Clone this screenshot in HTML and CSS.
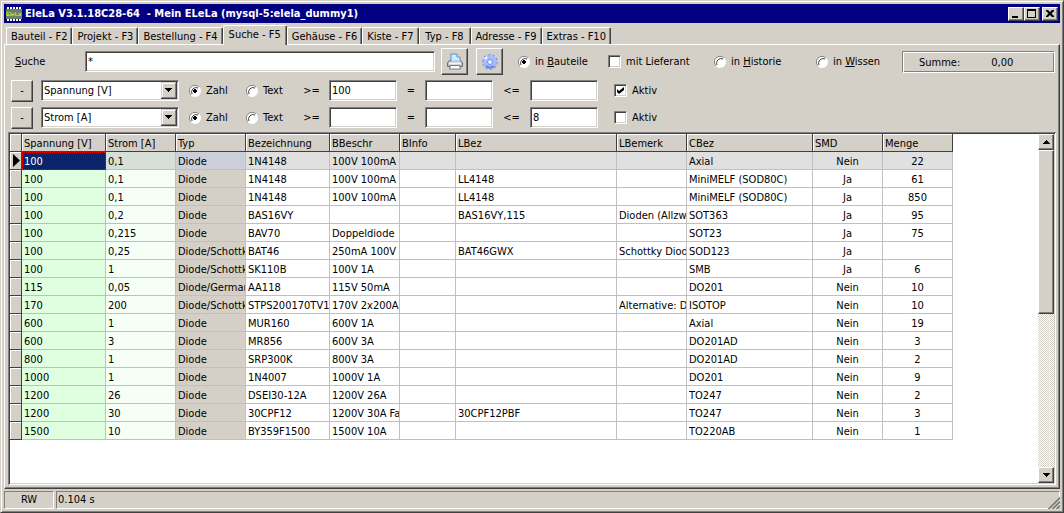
FILE: index.html
```
<!DOCTYPE html>
<html lang="de">
<head>
    <meta charset="UTF-8">
    <meta name="viewport" content="width=device-width, initial-scale=1.0">
    <title>EleLa V3.1.18C28-64 - Mein ELeLa</title>
    <link rel="stylesheet" href="styles.css">
</head>
<body>
    <div class="window">
        <header class="titlebar">
            <svg class="app-icon" width="16" height="16" viewBox="0 0 16 16">
                <path d="M2 1v14M5 1v14M8 1v14M11 1v14M14 1v14" stroke="#fff" stroke-width="2" />
                <rect y="3" width="16" height="10" fill="#6b8068" />
                <text x="0" y="10">EleLa</text>
            </svg>
            <h1>EleLa V3.1.18C28-64 &nbsp;- Mein ELeLa (mysql-5:elela_dummy1)</h1>
            <div class="window-buttons">
                <button type="button" aria-label="Minimieren">
                    <svg width="12" height="10" viewBox="0 0 12 10"><path d="M2 7h6v2H2z" /></svg>
                </button>
                <button type="button" aria-label="Maximieren">
                    <svg width="12" height="10" viewBox="0 0 12 10"><path d="M1 0h9v9H1zM2 2v6h7V2z" fill-rule="evenodd" /></svg>
                </button>
                <button type="button" class="close" aria-label="Schließen">
                    <svg width="12" height="10" viewBox="0 0 12 10"><path d="M2 1h2l2 2 2-2h2v1L7.500 4.500 10 7v1H8L6 6 4 8H2V7l2.500-2.500L2 2z" /></svg>
                </button>
            </div>
        </header>

        <nav class="tabs">
            <button type="button">Bauteil - F2</button>
            <button type="button">Projekt - F3</button>
            <button type="button">Bestellung - F4</button>
            <button type="button" class="active">Suche - F5</button>
            <button type="button">Gehäuse - F6</button>
            <button type="button">Kiste - F7</button>
            <button type="button">Typ - F8</button>
            <button type="button">Adresse - F9</button>
            <button type="button">Extras - F10</button>
        </nav>

        <main class="page">
            <form class="search">
                <label class="search-label" for="suche"><u>S</u>uche</label>
                <input type="text" class="search-text" id="suche" value="*">
                <button type="button" class="tool" aria-label="Drucken">
                    <svg width="18" height="18" viewBox="0 0 18 18">
                        <path d="M5 8V1h6l3 3v4z" fill="#d5ecff" stroke="#4f91cc" />
                        <path d="M11 1v3h3" fill="#fff" stroke="#4f91cc" />
                        <path d="M1.500 9.500l2-2h11l2 2v4h-15z" fill="#b4b8be" stroke="#697079" />
                        <path d="M5 7h9v2H5z" fill="#a9d3f5" />
                        <path d="M3 10.500h12" stroke="#f7f7f7" stroke-width="2" />
                        <path d="M4.500 12.500h9l1 3.500h-11z" fill="#fff" stroke="#747a83" />
                    </svg>
                </button>
                <button type="button" class="tool" aria-label="Einstellungen">
                    <svg width="18" height="18" viewBox="0 0 18 18">
                        <circle cx="9" cy="9" r="7" fill="none" stroke="#7d98ee" stroke-width="2" stroke-dasharray="2.400 2" />
                        <circle cx="9" cy="9" r="5" fill="#d5e0ff" stroke="#a5bbfa" stroke-width="4" />
                        <path d="M5 13a6 6 0 0 0 8 0" fill="none" stroke="#6582dd" stroke-width="2" />
                        <circle cx="9" cy="9" r="2.500" fill="#eef3ff" stroke="#6684e5" />
                        <path d="M4 6l2-2" stroke="#fff" stroke-width="2" />
                    </svg>
                </button>
                <label class="in-bauteile"><input type="radio" name="ziel" checked><span>in <u>B</u>auteile</span></label>
                <label class="mit-lieferant"><input type="checkbox"><span>mit Lieferant</span></label>
                <label class="in-historie"><input type="radio" name="ziel"><span>in <u>H</u>istorie</span></label>
                <label class="in-wissen"><input type="radio" name="ziel"><span>in <u>W</u>issen</span></label>
                <div class="sum"><span>Summe:</span><output>0,00</output></div>
            </form>

            <form class="filter">
                <button type="button" class="minus">-</button>
                <select aria-label="Feld"><option>Spannung [V]</option></select>
                <label><input type="radio" name="art" checked><span>Zahl</span></label>
                <label><input type="radio" name="art"><span>Text</span></label>
                <label class="op" for="min1">&gt;=</label>
                <input type="text" id="min1" value="100">
                <label class="op" for="eq1">=</label>
                <input type="text" id="eq1">
                <label class="op" for="max1">&lt;=</label>
                <input type="text" id="max1">
                <label class="aktiv"><input type="checkbox" checked><span>Aktiv</span></label>
            </form>

            <form class="filter">
                <button type="button" class="minus">-</button>
                <select aria-label="Feld"><option>Strom [A]</option></select>
                <label><input type="radio" name="art" checked><span>Zahl</span></label>
                <label><input type="radio" name="art"><span>Text</span></label>
                <label class="op" for="min2">&gt;=</label>
                <input type="text" id="min2">
                <label class="op" for="eq2">=</label>
                <input type="text" id="eq2">
                <label class="op" for="max2">&lt;=</label>
                <input type="text" id="max2" value="8">
                <label class="aktiv"><input type="checkbox"><span>Aktiv</span></label>
            </form>

            <div class="grid-box">
                <div class="grid">
                    <table>
                        <colgroup>
                            <col class="w-mark"><col class="w-84"><col class="w-70"><col class="w-70">
                            <col class="w-84"><col class="w-70"><col class="w-56"><col class="w-161">
                            <col class="w-70"><col class="w-126"><col class="w-70"><col class="w-70">
                        </colgroup>
                        <thead>
                            <tr>
                                <th></th><th>Spannung [V]</th><th>Strom [A]</th><th>Typ</th>
                                <th>Bezeichnung</th><th>BBeschr</th><th>BInfo</th><th>LBez</th>
                                <th>LBemerk</th><th>CBez</th><th>SMD</th><th>Menge</th>
                            </tr>
                        </thead>
                        <tbody id="rows"></tbody>
                    </table>
                </div>
                <div class="scrollbar">
                    <button type="button" aria-label="Nach oben">
                        <svg width="7" height="4" viewBox="0 0 7 4"><path d="M3 0h1v1h1v1h1v1h1v1H0V3h1V2h1V1h1z" /></svg>
                    </button>
                    <div class="thumb"></div>
                    <div class="track"></div>
                    <button type="button" aria-label="Nach unten">
                        <svg width="7" height="4" viewBox="0 0 7 4"><path d="M0 0h7v1H6v1H5v1H4v1H3V3H2V2H1V1H0z" /></svg>
                    </button>
                </div>
            </div>
        </main>

        <footer class="status">
            <div class="mode">RW</div>
            <div class="time">0.104 s</div>
            <svg class="grip" width="13" height="13" viewBox="0 0 13 13">
                <path d="M0 13L13 0M4 13l9-9M8 13l5-5" stroke="#fff" />
                <path d="M1.500 13L13 1.500M5.500 13L13 5.500M9.500 13L13 9.500" stroke="#808080" stroke-width="2" />
            </svg>
        </footer>
    </div>

    <script>
        // Spannung, Strom, Typ, Bezeichnung, BBeschr, BInfo, LBez, LBemerk, CBez, SMD, Menge
        const parts = [
            ["100", "0,1", "Diode", "1N4148", "100V 100mA", "", "", "", "Axial", "Nein", "22"],
            ["100", "0,1", "Diode", "1N4148", "100V 100mA", "", "LL4148", "", "MiniMELF (SOD80C)", "Ja", "61"],
            ["100", "0,1", "Diode", "1N4148", "100V 100mA", "", "LL4148", "", "MiniMELF (SOD80C)", "Ja", "850"],
            ["100", "0,2", "Diode", "BAS16VY", "", "", "BAS16VY,115", "Dioden (Allzw", "SOT363", "Ja", "95"],
            ["100", "0,215", "Diode", "BAV70", "Doppeldiode", "", "", "", "SOT23", "Ja", "75"],
            ["100", "0,25", "Diode/Schottk", "BAT46", "250mA 100V", "", "BAT46GWX", "Schottky Diod", "SOD123", "Ja", ""],
            ["100", "1", "Diode/Schottk", "SK110B", "100V 1A", "", "", "", "SMB", "Ja", "6"],
            ["115", "0,05", "Diode/German", "AA118", "115V 50mA", "", "", "", "DO201", "Nein", "10"],
            ["170", "200", "Diode/Schottk", "STPS200170TV1", "170V 2x200A", "", "", "Alternative: D", "ISOTOP", "Nein", "10"],
            ["600", "1", "Diode", "MUR160", "600V 1A", "", "", "", "Axial", "Nein", "19"],
            ["600", "3", "Diode", "MR856", "600V 3A", "", "", "", "DO201AD", "Nein", "3"],
            ["800", "1", "Diode", "SRP300K", "800V 3A", "", "", "", "DO201AD", "Nein", "2"],
            ["1000", "1", "Diode", "1N4007", "1000V 1A", "", "", "", "DO201", "Nein", "9"],
            ["1200", "26", "Diode", "DSEI30-12A", "1200V 26A", "", "", "", "TO247", "Nein", "2"],
            ["1200", "30", "Diode", "30CPF12", "1200V 30A Fa", "", "30CPF12PBF", "", "TO247", "Nein", "3"],
            ["1500", "10", "Diode", "BY359F1500", "1500V 10A", "", "", "", "TO220AB", "Nein", "1"]
        ];

        function renderRows() {
            const body = document.getElementById("rows");
            parts.forEach((part, index) => {
                const row = document.createElement("tr");
                if (index === 0) {
                    row.className = "current";
                }
                const mark = document.createElement("th");
                mark.scope = "row";
                row.appendChild(mark);
                part.forEach(value => {
                    const cell = document.createElement("td");
                    const text = document.createElement("div");
                    text.className = "cell";
                    text.textContent = value;
                    cell.appendChild(text);
                    row.appendChild(cell);
                });
                body.appendChild(row);
            });
        }

        renderRows();
    </script>
</body>
</html>
```
FILE: styles.css
```
* {
    box-sizing: border-box;
}

body {
    margin: 0;
    font-family: Tahoma, "DejaVu Sans Condensed", "Noto Sans", sans-serif;
    font-size: 11px;
    line-height: 14px;
    color: #000;
    background: #d4d0c8;
}

button,
input,
select {
    margin: 0;
    padding: 0;
    font: inherit;
    color: inherit;
    border-radius: 0;
    appearance: none;
}

svg {
    display: block;
}

.window {
    display: flex;
    flex-direction: column;
    height: 100vh;
    padding: 3px;
    border: 1px solid;
    border-color: #d4d0c8 #404040 #404040 #d4d0c8;
    box-shadow: inset 1px 1px #fff, inset -1px -1px #808080;
}

/* Title bar */
.titlebar {
    display: flex;
    align-items: center;
    height: 19px;
    padding: 0 2px;
    background: #000080;
    color: #fff;
}

.titlebar h1 {
    flex: 1;
    margin: 0 0 0 3px;
    font-size: 11px;
    line-height: 14px;
    white-space: nowrap;
}

.app-icon text {
    font-family: "Liberation Sans", sans-serif;
    font-size: 6px;
    fill: #d8ff20;
}

.window-buttons {
    display: flex;
}

.window-buttons button {
    width: 16px;
    height: 14px;
    padding: 1px;
}

.window-buttons .close {
    margin-left: 2px;
}

/* Raised buttons */
.window-buttons button,
.scrollbar button,
.thumb,
.tool,
.minus {
    border: 1px solid;
    border-color: #fff #404040 #404040 #fff;
    background: #d4d0c8;
    color: #000;
    box-shadow: inset -1px -1px #808080;
}

/* Tabs */
.tabs {
    display: flex;
    align-items: flex-end;
    height: 21px;
    padding-left: 2px;
}

.tabs button {
    min-width: 52px;
    height: 17px;
    padding: 1px 4px 0;
    border: 1px solid;
    border-color: #fff #404040 transparent #fff;
    border-bottom: 0;
    border-radius: 2px 2px 0 0;
    background: #d4d0c8;
    box-shadow: inset -1px 0 #808080;
    white-space: nowrap;
}

.tabs .active {
    height: 20px;
    padding: 0 5px 2px;
    margin-bottom: -1px;
    z-index: 1;
}

/* Page */
.page {
    display: flex;
    flex: 1;
    flex-direction: column;
    min-height: 0;
    padding: 1px 3px 3px;
    border: 1px solid;
    border-color: #fff #404040 #404040 #fff;
    box-shadow: inset -1px -1px #808080;
}

input[type="text"],
select {
    height: 21px;
    padding: 0 2px;
    border: 1px solid;
    border-color: #808080 #fff #fff #808080;
    background-color: #fff;
    box-shadow: inset 1px 1px #404040, inset -1px -1px #d4d0c8;
    outline: none;
}

label {
    display: flex;
    align-items: center;
    gap: 5px;
    white-space: nowrap;
}

input[type="radio"],
input[type="checkbox"] {
    flex: none;
    width: 12px;
    height: 12px;
}

input[type="radio"] {
    background: url("data:image/svg+xml,%3Csvg xmlns='http://www.w3.org/2000/svg' viewBox='0 0 12 12'%3E%3Ccircle cx='6' cy='6' r='6' fill='white'/%3E%3Cg fill='none'%3E%3Cpath d='M2 10A5.500 5.500 0 0 1 10 2' stroke='%23808080'/%3E%3Cpath d='M3 9A4.500 4.500 0 0 1 9 3' stroke='%23404040'/%3E%3C/g%3E%3C/svg%3E");
}

input[type="radio"]:checked {
    background-image: url("data:image/svg+xml,%3Csvg xmlns='http://www.w3.org/2000/svg' viewBox='0 0 12 12'%3E%3Ccircle cx='6' cy='6' r='6' fill='white'/%3E%3Cg fill='none'%3E%3Cpath d='M2 10A5.500 5.500 0 0 1 10 2' stroke='%23808080'/%3E%3Cpath d='M3 9A4.500 4.500 0 0 1 9 3' stroke='%23404040'/%3E%3C/g%3E%3Cpath d='M5 4h2v1h1v2H7v1H5V7H4V5h1z'/%3E%3C/svg%3E");
}

input[type="checkbox"] {
    width: 13px;
    height: 13px;
    border: 1px solid;
    border-color: #808080 #fff #fff #808080;
    background: #fff;
    box-shadow: inset 1px 1px #404040, inset -1px -1px #d4d0c8;
}

input[type="checkbox"]:checked {
    background-image: url("data:image/svg+xml,%3Csvg xmlns='http://www.w3.org/2000/svg' viewBox='0 0 11 11'%3E%3Cpath d='M2 4l2 2 5-4v3L4 9 2 7z'/%3E%3C/svg%3E");
}

/* Search row */
.search {
    display: flex;
    align-items: center;
    height: 31px;
    padding: 0 1px 0 7px;
}

.search-label {
    flex: none;
    gap: 0;
    width: 70px;
}

.search .search-text {
    flex: 1;
    min-width: 120px;
    margin-right: 6px;
}

.tool {
    display: grid;
    place-items: center;
    flex: none;
    width: 27px;
    height: 27px;
    margin-right: 8px;
}

.in-bauteile {
    width: 90px;
    margin-left: 7px;
}

.mit-lieferant {
    width: 106px;
}

.in-historie {
    width: 102px;
}

.in-wissen {
    width: 86px;
}

.sum {
    display: flex;
    gap: 31px;
    width: 153px;
    height: 22px;
    padding: 4px 16px 0;
    border: 1px solid;
    border-color: #808080 #fff #fff #808080;
    box-shadow: inset 1px 1px #fff, inset -1px -1px #808080;
}

/* Filter rows */
.filter {
    display: grid;
    grid-template-columns: 30px 148px 57px 48px 35px 68px 28px 68px 37px 68px 60px;
    align-items: center;
    height: 27px;
    padding-left: 3px;
}

.minus {
    width: 22px;
    height: 22px;
}

.filter select {
    width: 138px;
    padding-top: 1px;
    background-image: url("data:image/svg+xml,%3Csvg xmlns='http://www.w3.org/2000/svg' width='16' height='17'%3E%3Cpath fill='%23404040' d='M0 0h16v17H0z'/%3E%3Cpath fill='%23d4d0c8' d='M0 0h15v16H0z'/%3E%3Cpath fill='%23808080' d='M1 1h14v15H1z'/%3E%3Cpath fill='white' d='M1 1h13v14H1z'/%3E%3Cpath fill='%23d4d0c8' d='M2 2h12v13H2z'/%3E%3Cpath d='M4 6h7v1h-1v1H9v1H8v1H7V9H6V8H5V7H4z'/%3E%3C/svg%3E");
    background-repeat: no-repeat;
    background-position: right 1px top 1px;
}

.op {
    justify-content: center;
}

.aktiv {
    padding-left: 16px;
}

/* Result grid */
.grid-box {
    display: flex;
    flex: 1;
    min-height: 0;
    margin-top: 1px;
    padding: 2px;
    background: #fff;
    box-shadow: inset 1px 1px #808080, inset -1px -1px #fff, inset 2px 2px #404040, inset -2px -2px #d4d0c8;
}

.grid {
    flex: 1;
    min-width: 0;
    overflow: hidden;
}

table {
    width: 943px;
    table-layout: fixed;
    border-collapse: separate;
    border-spacing: 0;
}

.w-mark { width: 12px; }
.w-56 { width: 56px; }
.w-70 { width: 70px; }
.w-84 { width: 84px; }
.w-126 { width: 126px; }
.w-161 { width: 161px; }

th,
td {
    height: 18px;
    padding: 2px 0 0 2px;
    text-align: left;
    font-weight: normal;
    white-space: nowrap;
    border-right: 1px solid #c0c0c0;
    border-bottom: 1px solid #c0c0c0;
}

th {
    background: #d4d0c8;
    border-color: #404040;
    box-shadow: inset 1px 1px #fff;
}

.cell {
    overflow: hidden;
}

td:nth-child(2) { background: #e0ffe0; }
td:nth-child(3) { background: #f5fff5; }
td:nth-child(4) { background: #d4d0c8; }

td:nth-child(n+11) {
    padding-right: 2px;
    text-align: center;
}

.current td {
    background: #e0e0e0;
}

/* Focused cell with a dotted frame */
.current td:nth-child(2) {
    padding-bottom: 1px;
    border: 0;
    background-color: #0a246a;
    background-image:
        repeating-linear-gradient(90deg, #f00 0 1px, transparent 1px 2px),
        repeating-linear-gradient(90deg, #f00 0 1px, transparent 1px 2px),
        repeating-linear-gradient(#f00 0 1px, transparent 1px 2px),
        repeating-linear-gradient(#f00 0 1px, transparent 1px 2px);
    background-position: left top, left bottom, left top, right top;
    background-size: 100% 1px, 100% 1px, 1px 100%, 1px 100%;
    background-repeat: no-repeat;
    color: #fff;
}

.current td:nth-child(3) { background: #d7e0d7; }
.current td:nth-child(4) { background: #cacfda; }

.current th {
    background: #d4d0c8 url("data:image/svg+xml,%3Csvg xmlns='http://www.w3.org/2000/svg' width='7' height='13'%3E%3Cpath d='M0 0l7 6.500L0 13z'/%3E%3C/svg%3E") no-repeat 3px 2px;
}

/* Scrollbar */
.scrollbar {
    display: flex;
    flex-direction: column;
    width: 16px;
    background: repeating-conic-gradient(#fff 0 25%, #d4d0c8 0 50%) 0 0 / 2px 2px;
}

.scrollbar button {
    display: grid;
    place-items: center;
    height: 16px;
}

.thumb {
    flex: 163;
}

.track {
    flex: 154;
}

/* Status bar */
.status {
    display: flex;
    gap: 2px;
    height: 20px;
    padding-top: 2px;
    position: relative;
}

.status div {
    border: 1px solid;
    border-color: #808080 #fff #fff #808080;
    padding: 1px;
}

.status .mode {
    width: 50px;
    text-align: center;
}

.status .time {
    flex: 1;
}

.grip {
    position: absolute;
    right: 0;
    bottom: 0;
    background: #d4d0c8;
}
```
